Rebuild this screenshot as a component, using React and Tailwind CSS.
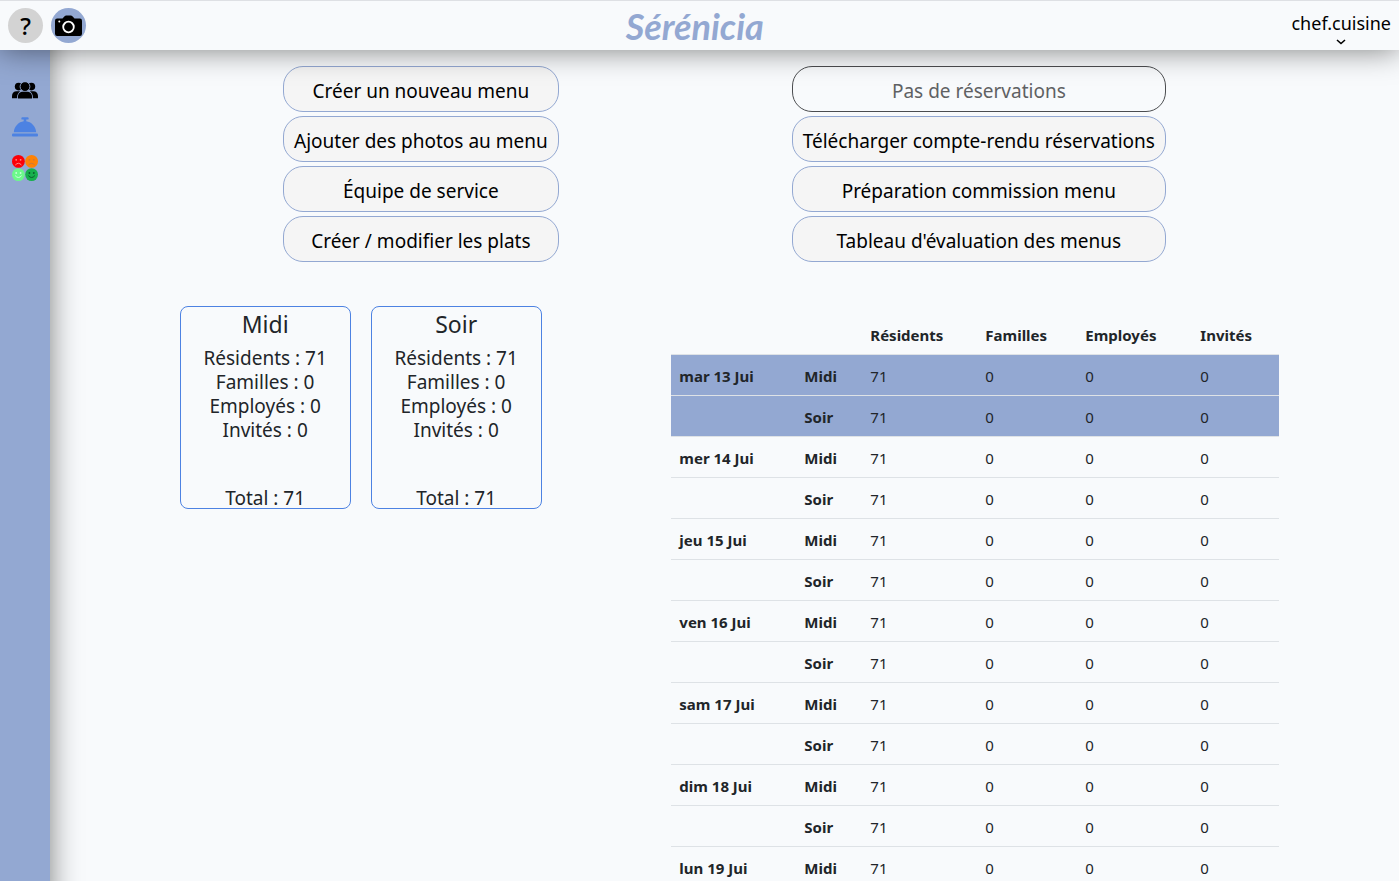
const leftActions = [
  "Créer un nouveau menu",
  "Ajouter des photos au menu",
  "Équipe de service",
  "Créer / modifier les plats",
];
const rightActions = [
  "Pas de réservations",
  "Télécharger compte-rendu réservations",
  "Préparation commission menu",
  "Tableau d'évaluation des menus",
];
const services = ["Midi", "Soir"];
const groups = [
  ["Résidents", 71],
  ["Familles", 0],
  ["Employés", 0],
  ["Invités", 0],
];
const rows = [
  ["mar 13 Jui", "Midi"],
  ["", "Soir"],
  ["mer 14 Jui", "Midi"],
  ["", "Soir"],
  ["jeu 15 Jui", "Midi"],
  ["", "Soir"],
  ["ven 16 Jui", "Midi"],
  ["", "Soir"],
  ["sam 17 Jui", "Midi"],
  ["", "Soir"],
  ["dim 18 Jui", "Midi"],
  ["", "Soir"],
  ["lun 19 Jui", "Midi"],
];

function Camera() {
  return (
    <svg viewBox="0 0 27 22" className="h-[22px] w-[27px]" aria-hidden="true">
      <path d="M2.5 3.5H7.5L9.6 1.2Q10.200.6 11.200.6h4.600q1 0 1.600.6l2.100 2.300h5A2.300 2.300 0 0 1 27 5.800v13a2.300 2.300 0 0 1-2.500 2.300h-22A2.300 2.300 0 0 1 0 18.800V5.800A2.300 2.300 0 0 1 2.500 3.500Z" fill="#000" />
      <circle cx="13.500" cy="12" r="5.300" fill="none" stroke="#fff" strokeWidth="1.800" />
      <circle cx="4.300" cy="6.500" r="1" fill="#fff" />
    </svg>
  );
}

function People() {
  return (
    <svg viewBox="0 0 26 17" className="h-[17px] w-[26px]" fill="#000" aria-hidden="true">
      <circle cx="6.600" cy="4.600" r="3.800" />
      <circle cx="19.400" cy="4.600" r="3.800" />
      <path d="M0 16.300v-2.300C0 11.200 2 9.300 4.500 9.300h3.700C6.200 10.600 5 12.800 5 16.300Z" />
      <path d="M26 16.300v-2.300C26 11.200 24 9.300 21.500 9.300h-3.700C19.800 10.600 21 12.800 21 16.300Z" />
      <circle cx="13" cy="4.600" r="4.900" stroke="#93a8d2" strokeWidth=".9" />
      <path d="M5.900 16.500v-1.800C5.900 11.600 8.200 9.700 11 9.700h4c2.800 0 5.100 1.900 5.100 5v1.800Z" />
    </svg>
  );
}

function Bell() {
  return (
    <svg viewBox="0 0 26 20" className="h-5 w-[26px]" fill="#4d82e2" aria-hidden="true">
      <rect x="0" y="16.5" width="26" height="3" rx="1" />
      <path d="M1.8 15.2C2.2 9 7 4.8 11.7 4.2V2.6h-1.2a1.2 1.2 0 0 1 0-2.4h5a1.2 1.2 0 0 1 0 2.4h-1.2v1.6C19 4.8 23.8 9 24.2 15.2Z" />
    </svg>
  );
}

function Face({ x, y, fill, line, mouth }) {
  return (
    <g transform={`translate(${x} ${y})`}>
      <circle r="6.4" fill={fill} />
      <circle cx="-2.2" cy="-1.6" r=".9" fill={line} />
      <circle cx="2.2" cy="-1.6" r=".9" fill={line} />
      <path d={mouth} fill="none" stroke={line} strokeWidth="1" strokeLinecap="round" />
    </g>
  );
}

function Faces() {
  const sad = "M-2.8 3.3Q0 .2 2.8 3.3";
  const smile = "M-3 1.3Q0 4.8 3 1.3";
  return (
    <svg viewBox="0 0 26 26" className="size-[26px]" aria-hidden="true">
      <Face x={6.4} y={6.4} fill="#fb0007" line="#ff8a8a" mouth={sad} />
      <Face x={19.6} y={6.4} fill="#ff8205" line="#c77a3c" mouth={sad} />
      <Face x={6.4} y={19.6} fill="#6cf98b" line="#c9ffdc" mouth={smile} />
      <Face x={19.6} y={19.6} fill="#17b04d" line="#0a5c2c" mouth={smile} />
    </svg>
  );
}

function Action({ label, disabled }) {
  return (
    <button
      type="button"
      disabled={disabled}
      className="h-[46px] rounded-[20px] border border-[#93a8d2] bg-[#f5f5f5] px-2.5 pt-1 text-[19px] leading-6 whitespace-nowrap text-black disabled:border-[#4b4d50] disabled:bg-transparent disabled:text-[#5f6163]"
    >
      {label}
    </button>
  );
}

export default function App() {
  return (
    <div className="flex h-screen flex-col overflow-hidden bg-[#f8fafc] font-['Segoe_UI','Noto_Sans',sans-serif] text-[#212529]">
      <header className="z-20 flex h-[50px] shrink-0 items-center justify-between border-t border-[#dee0e4] bg-[#f8fafc] px-2 shadow-[0_0_30px_rgba(0,0,0,0.5)]">
        <div className="flex gap-2 pr-3">
          <button type="button" aria-label="Aide" className="flex size-[35px] items-center justify-center rounded-full bg-[#d3d3d3] text-2xl font-medium text-black">
            ?
          </button>
          <button type="button" aria-label="Photo" className="flex size-[35px] items-center justify-center rounded-full bg-[#93a8d2]">
            <Camera />
          </button>
        </div>
        <h1 className="text-center font-['Brush_Script_MT','Lato',cursive] text-4xl font-bold text-[#93a8d2] italic">
          Sérénicia
        </h1>
        <button type="button" className="flex flex-col items-center pt-1 text-black">
          <span className="text-lg leading-6">chef.cuisine</span>
          <svg viewBox="0 0 10 6" className="mt-1 h-1.5 w-2.5" fill="none" stroke="currentColor" strokeWidth="1.6" aria-hidden="true">
            <path d="M1 1l4 3.5L9 1" />
          </svg>
        </button>
      </header>
      <div className="flex min-h-0 flex-1">
        <nav className="z-10 -mt-[50px] -mb-8 flex w-[50px] shrink-0 flex-col items-center bg-[#93a8d2] pt-[82px] shadow-[0_0_30px_rgba(0,0,0,0.5)]">
          <a href="#residents" aria-label="Résidents">
            <People />
          </a>
          <a href="#service" aria-label="Service" className="mt-[18px]">
            <Bell />
          </a>
          <a href="#satisfaction" aria-label="Satisfaction" className="mt-[18px]">
            <Faces />
          </a>
        </nav>
        <main className="min-w-0 flex-1 overflow-y-auto pt-4 [scrollbar-width:none]">
          <div className="flex justify-evenly">
            <div className="flex flex-col gap-1">
              {leftActions.map((label) => (
                <Action key={label} label={label} />
              ))}
            </div>
            <div className="flex flex-col gap-1">
              {rightActions.map((label, i) => (
                <Action key={label} label={label} disabled={i === 0} />
              ))}
            </div>
          </div>
          <div className="mt-11 flex items-start justify-evenly">
            <div className="flex gap-5 px-2.5">
              {services.map((name) => (
                <section key={name} className="w-[171px] rounded-lg border border-[#4d82e2] text-center text-[19px] leading-6">
                  <h2 className="pt-[3px] pb-2 text-[23px] leading-7">{name}</h2>
                  {groups.map(([group, count]) => (
                    <p key={group}>{`${group} : ${count}`}</p>
                  ))}
                  <p className="mt-11 -mb-0.5">Total : 71</p>
                </section>
              ))}
            </div>
            <table className="mt-2 w-[608px] table-fixed border-collapse text-left text-[15px] leading-6">
              <colgroup>
                <col className="w-[125px]" />
                <col className="w-[66px]" />
                <col className="w-[115px]" />
                <col className="w-[100px]" />
                <col className="w-[115px]" />
                <col />
              </colgroup>
              <thead>
                <tr className="border-b border-[#dee2e6]">
                  <td />
                  <td />
                  {groups.map(([group]) => (
                    <th key={group} scope="col" className="px-2 pt-[9px] pb-[7px] font-bold">
                      {group}
                    </th>
                  ))}
                </tr>
              </thead>
              <tbody>
                {rows.map(([day, service], i) => (
                  <tr key={i} className={i < 2 ? "border-b border-[#dee2e6] bg-[#93a8d2]" : "border-b border-[#dee2e6]"}>
                    <th scope="row" className="px-2 pt-[9px] pb-[7px] font-bold">{day}</th>
                    <th scope="row" className="px-2 pt-[9px] pb-[7px] font-bold">{service}</th>
                    {groups.map(([group, count]) => (
                      <td key={group} className="px-2 pt-[9px] pb-[7px]">{count}</td>
                    ))}
                  </tr>
                ))}
              </tbody>
            </table>
          </div>
        </main>
      </div>
    </div>
  );
}
